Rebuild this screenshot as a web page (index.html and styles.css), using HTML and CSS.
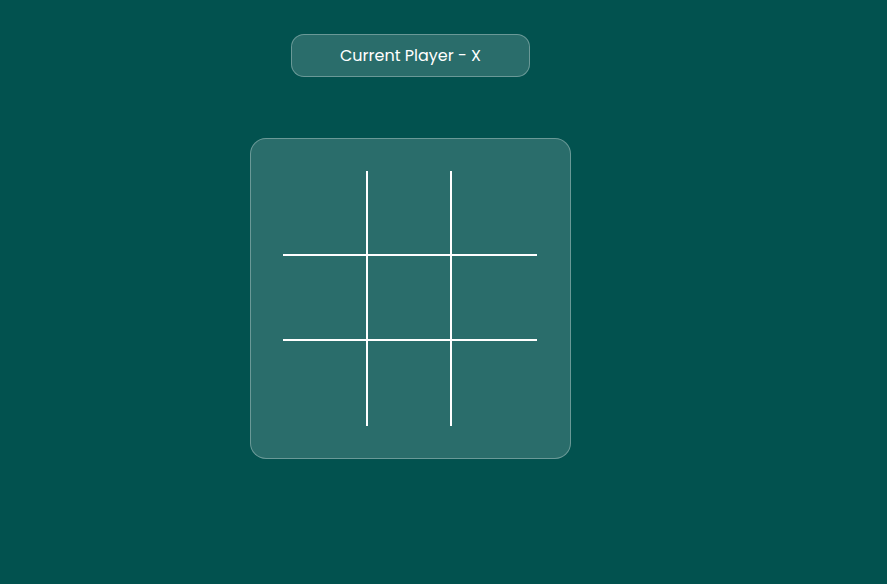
FILE: index.html
```html
<!DOCTYPE html>
<html lang="en">
<head>
<meta charset="utf-8">
<title>Tic Tac Toe</title>
<link rel="stylesheet" href="styles.css">
</head>
<body>
<main class="game">
  <div class="status">Current Player - X</div>
  <div class="board">
    <div class="grid">
      <div class="cell r c"></div>
      <div class="cell r c"></div>
      <div class="cell c"></div>
      <div class="cell r c"></div>
      <div class="cell r c"></div>
      <div class="cell c"></div>
      <div class="cell r"></div>
      <div class="cell r"></div>
      <div class="cell"></div>
    </div>
  </div>
</main>
</body>
</html>
```
FILE: styles.css
```css
html, body {
  margin: 0;
  padding: 0;
}
body {
  background: #02524f;
  width: 887px;
  height: 584px;
  font-family: "Poppins", "Inter", "Noto Sans", sans-serif;
  color: #ffffff;
}
.game {
  display: flex;
  flex-direction: column;
  align-items: center;
  width: 321px;
  margin-left: 250px;
  padding-top: 34px;
  gap: 61px;
}
.status {
  box-sizing: border-box;
  width: 239px;
  height: 43px;
  display: flex;
  align-items: center;
  justify-content: center;
  background: rgba(255, 255, 255, 0.16);
  border: 1px solid rgba(255, 255, 255, 0.3);
  border-radius: 13px;
  font-size: 16px;
}
.board {
  box-sizing: border-box;
  width: 321px;
  height: 321px;
  padding: 32px;
  background: rgba(255, 255, 255, 0.16);
  border: 1px solid rgba(255, 255, 255, 0.3);
  border-radius: 16px;
}
.grid {
  display: grid;
  grid-template-columns: 85px 84px 85px;
  grid-template-rows: repeat(3, 85px);
}
.cell {
  box-sizing: border-box;
}
.cell.r {
  border-right: 2px solid #ffffff;
}
.cell.c {
  border-bottom: 2px solid #ffffff;
}
```
